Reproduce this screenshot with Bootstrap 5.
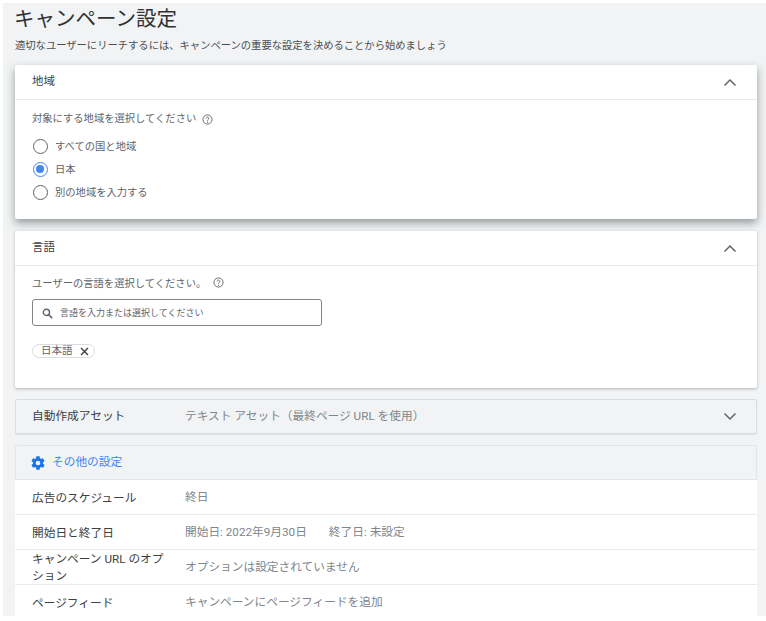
<!DOCTYPE html>
<html lang="ja">
<head>
<meta charset="utf-8">
<title>キャンペーン設定</title>
<link href="https://cdn.jsdelivr.net/npm/bootstrap@5.3.0/dist/css/bootstrap.min.css" rel="stylesheet">
<style>
html,body{height:621px;overflow:hidden;background:#fff;}
body{font-family:Roboto,"Noto Sans CJK JP",sans-serif;color:#3c4043;padding:3px 0 0 3px;}
.stage{height:613px;background:#f1f3f4;overflow:hidden;padding:0 9px 0 12px;}
.page-ttl{font-size:20.5px;line-height:30px;font-weight:400;color:#303134;margin:0 0 0 -1px;height:30px;padding-top:1px;}
.page-sub{font-size:10.3px;line-height:16px;color:#4a4e52;margin:5px 0 0;height:15px;}
.pane{background:#fff;border-radius:2px;box-shadow:0 1px 3px rgba(60,64,67,.35);overflow:hidden;}
.pane-a{margin-top:12px;height:154px;box-shadow:0 4px 9px rgba(60,64,67,.5);}
.pane-b{margin-top:12px;height:157px;}
.pane-h{height:35px;padding:0 20px 0 17px;border-bottom:1px solid #e8eaed;font-size:11.5px;color:#3c4043;}
.pane-q{padding:11px 17px 0;}
.pane-q-lang{padding-top:10px;}
.hint{font-size:10.3px;line-height:16px;color:#5f6368;gap:6px;}
.hint-gap{margin-bottom:8px;}
.hint-lang{gap:7px;}
.hint-lang svg{margin-top:-3px;}
.opt{height:23px;font-size:10.3px;color:#5f6368;gap:7px;padding-left:1px;}
.radio-o{width:15px;height:15px;border-radius:50%;border:1.5px solid #5f6368;flex:none;}
.radio-on{border-color:#4285f4;padding:2px;}
.radio-on i{display:block;width:8px;height:8px;border-radius:50%;background:#4285f4;}
.srch{width:290px;height:27px;margin-top:7px;border:1px solid #80868b;border-radius:3px;padding:2px 9px 0;gap:7px;font-size:9px;color:#5f6368;}
.tagchip{margin-top:18px;height:14px;width:63px;border:1px solid #dadce0;border-radius:7px;padding:0 5px 0 8px;font-size:10.5px;color:#5f6368;}
.strip{height:35px;margin-top:11px;background:#f1f3f4;border:1px solid #dadce0;border-radius:2px;padding:0 19px 0 16px;font-size:11.7px;color:#3c4043;box-shadow:0 1px 1px rgba(60,64,67,.1);}
.lbl{width:153px;flex:none;line-height:17px;padding-right:12px;}
.val{color:#80868b;}
.dates{gap:22px;}
.more{margin-top:11px;height:35px;background:#f1f3f4;border:1px solid #e3e5e8;border-radius:2px 2px 0 0;padding:0 0 0 14px;gap:6px;font-size:11.7px;color:#4285f4;}
.rowline{height:35px;background:#fff;border-bottom:1px solid #e8eaed;padding:2px 17px 0;font-size:11.7px;color:#3c4043;}
</style>
</head>
<body>
<div class="stage">
  <h1 class="page-ttl">キャンペーン設定</h1>
  <p class="page-sub">適切なユーザーにリーチするには、キャンペーンの重要な設定を決めることから始めましょう</p>

  <section class="pane pane-a">
    <div class="pane-h d-flex align-items-center justify-content-between"><span>地域</span>
      <svg width="14" height="9" viewBox="0 0 14 9"><path d="M1.5 7.5 7 2l5.500 5.500" fill="none" stroke="#5f6368" stroke-width="1.500"/></svg></div>
    <div class="pane-q">
      <div class="hint hint-gap d-flex align-items-center"><span>対象にする地域を選択してください</span>
        <svg width="11" height="11" viewBox="0 0 12 12"><circle cx="6" cy="6" r="5" fill="none" stroke="#5f6368"/><path d="M4.500 4.800a1.500 1.500 0 1 1 2.300 1.300c-.6.400-.8.600-.8 1.200" fill="none" stroke="#5f6368"/><circle cx="6" cy="8.900" r=".6" fill="#5f6368"/></svg></div>
      <div class="opt d-flex align-items-center"><span class="radio-o"></span><span>すべての国と地域</span></div>
      <div class="opt d-flex align-items-center"><span class="radio-o radio-on"><i></i></span><span>日本</span></div>
      <div class="opt d-flex align-items-center"><span class="radio-o"></span><span>別の地域を入力する</span></div>
    </div>
  </section>

  <section class="pane pane-b">
    <div class="pane-h d-flex align-items-center justify-content-between"><span>言語</span>
      <svg width="14" height="9" viewBox="0 0 14 9"><path d="M1.5 7.5 7 2l5.500 5.500" fill="none" stroke="#5f6368" stroke-width="1.500"/></svg></div>
    <div class="pane-q pane-q-lang">
      <div class="hint hint-lang d-flex align-items-center"><span>ユーザーの言語を選択してください。</span>
        <svg width="11" height="11" viewBox="0 0 12 12"><circle cx="6" cy="6" r="5" fill="none" stroke="#5f6368"/><path d="M4.500 4.800a1.500 1.500 0 1 1 2.300 1.300c-.6.400-.8.600-.8 1.200" fill="none" stroke="#5f6368"/><circle cx="6" cy="8.900" r=".6" fill="#5f6368"/></svg></div>
      <div class="srch d-flex align-items-center">
        <svg width="11" height="11" viewBox="0 0 12 12"><circle cx="4.800" cy="4.800" r="3.400" fill="none" stroke="#5f6368" stroke-width="1.500"/><path d="m7.300 7.300 3.800 3.800" stroke="#5f6368" stroke-width="1.700"/></svg>
        <span>言語を入力または選択してください</span></div>
      <div class="tagchip d-flex align-items-center justify-content-between"><span>日本語</span>
        <svg width="9" height="9" viewBox="0 0 9 9"><path d="m1 1 7 7M8 1 1 8" stroke="#3c4043" stroke-width="1.400"/></svg></div>
    </div>
  </section>

  <div class="strip d-flex align-items-center"><span class="lbl">自動作成アセット</span><span class="val flex-grow-1">テキスト アセット（最終ページ URL を使用）</span>
    <svg width="14" height="9" viewBox="0 0 14 9"><path d="M1.5 1.500 7 7l5.500-5.500" fill="none" stroke="#5f6368" stroke-width="1.500"/></svg></div>

  <div class="more d-flex align-items-center">
    <svg width="16" height="16" viewBox="0 0 24 24"><path fill="#1a73e8" d="M19.400 13c.05-.3.1-.65.100-1s-.05-.7-.1-1l2.100-1.650c.2-.15.250-.4.100-.65l-2-3.450c-.1-.2-.4-.3-.6-.2l-2.500 1c-.5-.4-1.050-.7-1.700-1L14.500 2.400c0-.25-.25-.4-.5-.4h-4c-.25 0-.45.150-.5.400l-.35 2.650c-.6.250-1.150.6-1.700 1l-2.450-1c-.25-.1-.5 0-.6.200l-2 3.450c-.15.250-.1.500.1.650L4.600 11c-.05.300-.1.650-.1 1s.05.700.1 1l-2.100 1.650c-.2.150-.25.400-.1.650l2 3.450c.1.200.35.300.6.200l2.450-1c.55.400 1.100.750 1.700 1l.35 2.650c.05.250.25.400.5.400h4c.25 0 .45-.15.500-.4l.35-2.650c.65-.25 1.200-.6 1.700-1l2.500 1c.2.100.5 0 .6-.2l2-3.450c.15-.25.100-.5-.1-.65zM12 15.500a3.500 3.500 0 1 1 0-7 3.500 3.500 0 0 1 0 7z"/></svg>
    <span>その他の設定</span></div>
  <div class="rowline d-flex align-items-center"><span class="lbl">広告のスケジュール</span><span class="val">終日</span></div>
  <div class="rowline d-flex align-items-center"><span class="lbl">開始日と終了日</span><span class="val dates d-flex"><span>開始日: 2022年9月30日</span><span>終了日: 未設定</span></span></div>
  <div class="rowline d-flex align-items-center"><span class="lbl">キャンペーン URL のオプション</span><span class="val">オプションは設定されていません</span></div>
  <div class="rowline d-flex align-items-center"><span class="lbl">ページフィード</span><span class="val">キャンペーンにページフィードを追加</span></div>
</div>
<script src="https://cdn.jsdelivr.net/npm/bootstrap@5.3.0/dist/js/bootstrap.bundle.min.js"></script>
</body>
</html>
